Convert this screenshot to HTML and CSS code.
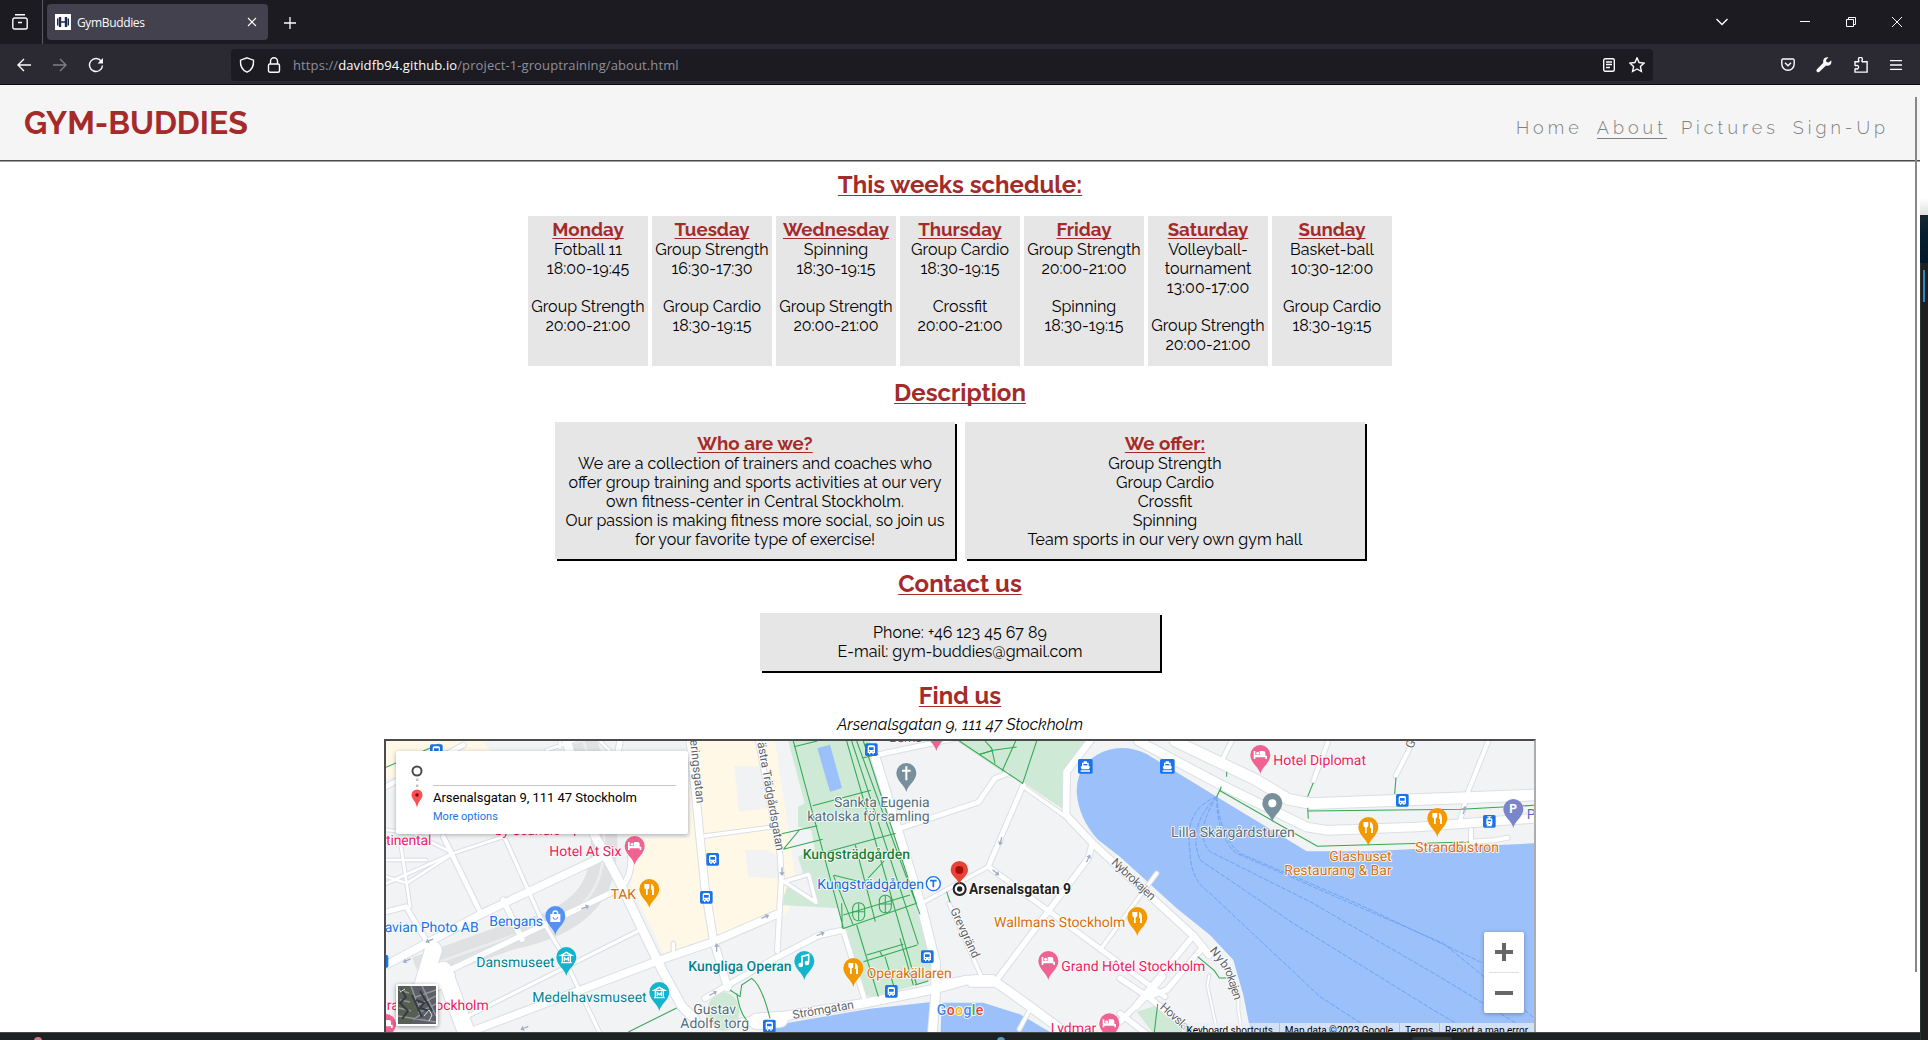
FILE: index.html
```html
<!DOCTYPE html>
<html lang="en">
<head>
<meta charset="utf-8">
<title>GymBuddies</title>
<link rel="stylesheet" href="styles.css">
</head>
<body>
<div class="window">
  <div class="tabbar">
    <svg class="ic view" viewBox="0 0 16 16"><path d="M3 .8h10M2.600 4h10.800a1.800 1.800 0 0 1 1.800 1.800v7.400a1.800 1.800 0 0 1-1.800 1.800H2.600a1.800 1.800 0 0 1-1.800-1.800V5.800A1.800 1.800 0 0 1 2.600 4zM6 8.500h4"/></svg>
    <div class="tab">
      <svg class="favicon" viewBox="0 0 16 16"><rect width="16" height="16" fill="#fff"/><path d="M5 3v10M11 3v10" stroke="#1b2c52" stroke-width="2.400"/><path d="M2.700 4.500v7M13.300 4.500v7" stroke="#1b2c52" stroke-width="1.400"/><path d="M6 8h4" stroke="#1b2c52" stroke-width="1.500"/></svg>
      <span class="tab-title">GymBuddies</span>
      <svg class="ic close" viewBox="0 0 10 10"><path d="M1 1l8 8M9 1L1 9"/></svg>
    </div>
    <svg class="ic plus" viewBox="0 0 12 12"><path d="M6 0v12M0 6h12"/></svg>
    <div class="controls">
      <svg class="ic chev" viewBox="0 0 12 8"><path d="M.5 1L6 6.500 11.500 1"/></svg>
      <svg class="ic min" viewBox="0 0 10 10"><path d="M0 4.500h10"/></svg>
      <svg class="ic max" viewBox="0 0 10 10"><path d="M.5 2.500h7v7h-7zM2.500 2.500v-2h7v7h-2"/></svg>
      <svg class="ic quit" viewBox="0 0 10 10"><path d="M0 0l10 10M10 0L0 10"/></svg>
    </div>
  </div>
  <div class="toolbar">
    <svg class="ic back" viewBox="0 0 14 14"><path d="M14 7H1M7 1L1 7l6 6"/></svg>
    <svg class="ic fwd" viewBox="0 0 14 14"><path d="M0 7h13M7 1l6 6-6 6"/></svg>
    <svg class="ic reload" viewBox="0 0 16 16"><path d="M13.500 4.500A6.500 6.500 0 1 0 14.500 8.500"/><path d="M15 1v5.500H9.500z" class="solid"/></svg>
    <div class="urlbar">
      <svg class="ic shield" viewBox="0 0 16 16"><path d="M8 .8l6.500 2.400c.4 5.300-1.500 9.800-6.500 12C3 13 1.100 8.500 1.500 3.200z"/></svg>
      <svg class="ic lock" viewBox="0 0 14 16"><rect x="1.500" y="7" width="11" height="8.200" rx="1.500"/><path d="M3.500 7V4.300a3.500 3.500 0 0 1 7 0V7"/></svg>
      <span class="url">https://<b>davidfb94.github.io</b>/project-1-grouptraining/about.html</span>
      <svg class="ic reader" viewBox="0 0 12 14"><rect x=".7" y=".7" width="10.600" height="12.600" rx="1.500"/><path d="M3 4h6M3 6.500h6M3 9.500h4"/></svg>
      <svg class="ic star" viewBox="0 0 16 16"><path d="M8 .9l2.100 4.600 5 .6-3.700 3.400 1 5L8 12l-4.400 2.500 1-5L.9 6.100l5-.6z"/></svg>
    </div>
    <svg class="ic pocket" viewBox="0 0 14 13"><path d="M2.200 1h9.600A1.300 1.300 0 0 1 13.200 2.300V6a6.200 6.200 0 0 1-12.400 0V2.300A1.300 1.300 0 0 1 2.200 1zM4 4.800l3 2.900 3-2.900"/></svg>
    <svg class="ic wrench" viewBox="0 0 16 16"><path class="solid" d="M15.200 3.500l-2.700 2-2-.4-.5-2 2.400-2.600C9.500-.4 6.300 2 7.300 5.700L1 12.200a1.600 1.600 0 0 0 2.500 2.500l6.500-6.200c3.500 1 6.300-1.500 5.200-5z"/></svg>
    <svg class="ic puzzle" viewBox="0 0 14 16"><path d="M1 4.800h3.500c1-.4-.2-1.300 0-2.500a1.900 1.900 0 0 1 3.800 0c.2 1.200-1 2.100 0 2.500h4.800v10.300H1V12c.3-1 1.200.2 2.300 0a1.900 1.900 0 0 0 0-3.600C2.200 8.200 1.300 9.300 1 8.400z"/></svg>
    <svg class="ic menu" viewBox="0 0 12 10"><path d="M0 .5h12M0 5h12M0 9.500h12"/></svg>
  </div>

  <div class="page">
    <header class="header">
      <div class="logo">GYM-BUDDIES</div>
      <nav class="nav"><a>Home</a><a class="active">About</a><a>Pictures</a><a>Sign-Up</a></nav>
    </header>
    <h2 class="t-schedule">This weeks schedule:</h2>
    <section class="schedule">
      <div class="day"><h3>Monday</h3><p>Fotball 11<br>18:00-19:45</p><p>Group Strength<br>20:00-21:00</p></div>
      <div class="day"><h3>Tuesday</h3><p>Group Strength<br>16:30-17:30</p><p>Group Cardio<br>18:30-19:15</p></div>
      <div class="day"><h3>Wednesday</h3><p>Spinning<br>18:30-19:15</p><p>Group Strength<br>20:00-21:00</p></div>
      <div class="day"><h3>Thursday</h3><p>Group Cardio<br>18:30-19:15</p><p>Crossfit<br>20:00-21:00</p></div>
      <div class="day"><h3>Friday</h3><p>Group Strength<br>20:00-21:00</p><p>Spinning<br>18:30-19:15</p></div>
      <div class="day"><h3>Saturday</h3><p>Volleyball-<br>tournament<br>13:00-17:00</p><p>Group Strength<br>20:00-21:00</p></div>
      <div class="day"><h3>Sunday</h3><p>Basket-ball<br>10:30-12:00</p><p>Group Cardio<br>18:30-19:15</p></div>
    </section>
    <h2 class="t-desc">Description</h2>
    <section class="about">
      <div class="card"><h3>Who are we?</h3><p>We are a collection of trainers and coaches who<br>offer group training and sports activities at our very<br>own fitness-center in Central Stockholm.<br>Our passion is making fitness more social, so join us<br>for your favorite type of exercise!</p></div>
      <div class="card"><h3>We offer:</h3><p>Group Strength<br>Group Cardio<br>Crossfit<br>Spinning<br>Team sports in our very own gym hall</p></div>
    </section>
    <h2 class="t-contact">Contact us</h2>
    <section class="about"><div class="card contact"><p>Phone: +46 123 45 67 89<br>E-mail: gym-buddies@gmail.com</p></div></section>
    <h2 class="t-find">Find us</h2>
    <address>Arsenalsgatan 9, 111 47 Stockholm</address>
    <div class="map">
      <svg class="canvas" viewBox="18 33 3444 873">
        <defs>
          <path id="pin" d="M0 57C-4 36-30 24-30 0a30 30 0 0 1 60 0C30 24 4 36 0 57z"/>
          <g id="bed" fill="#fff"><path d="M-20-12h5v14h30v-8a6 6 0 0 0-6-6H-2V0h-13v12h-5zM15 2h5v10h-5zM-16 2h32v5h-32z"/><circle cx="-8" cy="-5" r="4.500"/></g>
          <g id="fork" fill="#fff"><path d="M-15-15h15v10q0 6-5 6v17h-5V1q-5 0-5-6zM5-15q9 2 9 16v17H8V3H5z"/></g>
          <g id="museum" fill="none" stroke="#fff" stroke-width="4"><path d="M-16-8L0-17l16 9zM-12-7v20M12-7v20M-16 14h32M-6 10V-1l6 6 6-6v11"/></g>
          <g id="bus"><rect x="-19" y="-19" width="38" height="38" rx="5" fill="#1a73e8"/><path d="M-11 10V-8q0-5 5-5H6q5 0 5 5v18H7v4H3v-4h-6v4h-4v-4z" fill="#fff"/><path d="M-7-7H7v8H-7zM-7 5h3v2h-3zM4 5h3v2H4z" fill="#1a73e8"/></g>
          <g id="tram"><rect x="-19" y="-19" width="38" height="38" rx="5" fill="#1a73e8"/><path d="M-6-15H6v3H2v3h3q4 0 4 4V8q0 3-3 4l3 3H-9l3-3q-3-1-3-4v-13q0-4 4-4h3v-3h-4z" fill="#fff"/><path d="M-5-5H5v5H-5zM-2 5h4v3h-4z" fill="#1a73e8"/></g>
          <g id="ferry"><rect x="-22" y="-22" width="44" height="44" rx="5" fill="#1a73e8"/><path d="M-5-15H5v4h5v10l4 2-3 8h-22l-3-8 4-2v-10h5zM-14 12h28v4h-28z" fill="#fff"/><path d="M-6-7H6v4H-6z" fill="#1a73e8"/></g>
          <path id="arrow" d="M-13-2H2v-6L13 0 2 8V2h-15z" fill="#a5adc6"/>
          <g id="streets" fill="none" stroke-linejoin="round" stroke-linecap="round">
            <path class="w8" d="M20 300l80 10 120 60-140 90-62-20M80 460l-20-130M80 460l10 70M220 370L20 460M220 370l150-50M660 33l60 60M500 60l90-30M540 33v20M18 390l120 0"/>
            <path class="w14" d="M190 320l110 225M18 545l60-15 60 100M18 170L250 45"/>
            <path class="w10" d="M375 325l105 235 60 100 120 250M250 865l530-265"/>
            <path class="w16" d="M210 720l490-235M370 510l56 118M725 470q30-30 28-90"/>
            <path class="w22" d="M18 705l290-155 350-165"/>
            <path class="w60" d="M130 760l30-100M190 720l70 190M100 790l100-50"/>
            <path class="w26" d="M560 33l85 285 70 130 130 270 60 110 40 40"/>
            <path class="w16" d="M720 33l-10 60"/>
            <path class="w22" d="M270 906L840 690l160-55 190-82M931 33l44 440 26 160 42 140"/>
            <path class="w10" d="M880 640v30M975 318l210-28"/>
            <path class="w16" d="M975 805l95-55 115-65 130-68 72-16"/>
            <path class="w50" d="M1130 874l70-6"/>
            <g transform="translate(1080)">
              <path class="w14" d="M55 33l65 340 4 70-12 220M310 602l62 200"/>
              <path class="w10" d="M132 455l74-22 22 84z"/>
              <path class="w26" d="M0 880l380-62 200-40 100-28 80 2 50 34 150 110M402 70l145 470 40 160 0 90-10 120"/>
              <path class="w10" d="M600 755l110-15h50M690 765h90"/>
              <path class="w14" d="M410 75l260-55M480 295l235-78 50-72 35-14M850 165L745 410l340 250 190 140"/>
              <path class="w10" d="M745 410l-200 110M722 735l-95-215M850 170l130 92M1080 660l170-230M870 838l-32 60"/>
              <path class="w16" d="M770 750l150-200 125-165 12-45"/>
              <path class="w20" d="M1050 33l-70 92-2 130 80 85 300 275 50 60"/>
              <path class="w16" d="M1190 830l80-90M1140 850l90 70"/>
            </g>
            <g transform="translate(2220)">
              <path class="w16" d="M222 615L40 835l-40 40M250 650L140 780l-55 20M0 745l90 60 110 90"/>
              <path class="w6" d="M268 735l-6 30 30 141M355 790v50l10 66"/>
              <path class="w26" d="M55 33l245 130 260 128 60 10 270-10 352-26"/>
              <path class="w36" d="M165 33l240 115 100 60 70 13 667-26"/>
              <path class="w12" d="M335 33l-25 50M625 33l-45 120M880 33l-53 105M1105 33l-60 150-25 90M1053 300v35l70-4 40-8"/>
            </g>
          </g>
        </defs>
        <rect x="18" y="33" width="3444" height="873" fill="#f1f3f4"/>
        <g fill="#fff8e6">
          <path d="M18 33h290l30 35-80 20-240 60z"/>
          <path d="M735 33h450l70 470-50 60-355 107-95-200z"/>
        </g>
        <g fill="#f0f2f4"><path d="M1062 108l80 2 50 120-115 15zM1095 360l65 0 40 20v65l-95-5zM735 33h195v290H765z"/></g>
        <g fill="none" stroke="#e0e1e2"><path d="M610 33q90 260 50 400T390 620L110 720" stroke-width="80"/><path d="M610 33q90 260 50 400T390 620L110 720" stroke="#eceded" stroke-width="8"/></g>
        <g fill="#ceead6" transform="translate(1080)">
          <path d="M145 33h245l150 480 52 230-70 25-125 32-30-5-60-190-10-70-175-10 25-70 45-15-18-60 50-20-10-60-40-10v-60l20-10z"/>
          <path d="M650 33h390l-55 90-8 120-122-82-60-30z"/>
          <path d="M132 455l74-22 22 84z" fill="#f1f3f4"/>
          <ellipse cx="-50" cy="845" rx="48" ry="58"/>
          <path d="M1190 845l80-25 100 90h-130z"/>
        </g>
        <g fill="#9bc0fa">
          <path transform="translate(1080)" d="M232 55l38-11 36 130-36 11zM90 888l300-52 185-20-8 90H90zM605 818l125 0 110 35 90 53H602z"/>
          <path transform="translate(2220)" d="M80 72Q0 35-70 75q-60 35-60 110 5 80 65 145l65 50 170 155 100 80 70 75 30 105 22 111h852V340l-500 24H560L290 200z"/>
        </g>
        <g class="ferry-lines" transform="translate(2220)"><path d="M290 200q-100 40-80 160 0 90 60 130l330 310 170 110M290 200q-90 90-50 190l280 190 420 260 120 70M290 200q-70 110-20 165l300 150 380 220 280 170M290 200q0 120 60 170l320 140 300 130 280 230M290 200q10 120 70 170l350 150 380 180"/></g>
        <use href="#streets" class="casing"/>
        <use href="#streets" class="fill"/>
        <g class="paths">
          <path d="M18 112l160-70M1050 780l30 20 5-35 30-20q30 20 55 120M1070 790q10 60 30 80M745 906l145-72"/>
          <g transform="translate(1080)">
            <path d="M160 33l150 560M162 50l70-17M320 33l210 732M335 33l200 610M350 33l190 520M370 33l160 490M218 227l175-46M365 85l50-12M122 312l110-25M130 358l118-30M130 358l48-58M262 365l205-55M282 436l90 22 60-65M280 436l60 150M308 596l222-76M310 555l200-60M346 345l60 230M350 585l65 215M380 675l110-32M370 695l162-50M435 680l30 100M525 765l40-12M305 520l2 75M520 765l-40-140M420 665l8 15"/>
            <rect x="338" y="518" width="36" height="54" rx="17"/><rect x="418" y="496" width="36" height="52" rx="17"/><path d="M356 520v50M338 545h36M436 498v50M418 522h36"/>
            <path d="M658 33l190 127 42-127M720 73l40-12 70-10M735 33l20 22 10 45"/><path d="M787 122l40-89M760 61l-40 12M620 485l10 32"/>
          </g>
          <g transform="translate(2220)"><path d="M290 200l14-30-4 12 292 167 155-5 300-8M320 125v15M580 158l-17 42M563 233l2 33M563 243l460-5 219-12M828 142l-4 50M233 680l50 42 15 22h25M113 822l-10 84"/></g>
        </g>
        <g>
          <use href="#arrow" transform="translate(616 532) rotate(-22)"/><use href="#arrow" transform="translate(148 632) rotate(155)"/><use href="#arrow" transform="translate(80 692) rotate(155)"/><use href="#arrow" transform="translate(433 894) rotate(157)"/><use href="#arrow" transform="translate(1010 652) rotate(-90)"/><use href="#arrow" transform="translate(1156 560) rotate(-22)"/><use href="#arrow" transform="translate(1000 790) rotate(-28)"/><use href="#arrow" transform="translate(1206 425) rotate(90)"/><use href="#arrow" transform="translate(1322 612) rotate(-22)"/><use href="#arrow" transform="translate(1862 334) rotate(105)"/><use href="#arrow" transform="translate(1848 428) rotate(40)"/><use href="#arrow" transform="translate(2125 385) rotate(-65)"/><use href="#arrow" transform="translate(3253 240) rotate(-75)"/>
        </g>
        <g>
          <use href="#bus" x="169" y="62"/><use href="#bus" x="998" y="388"/><use href="#bus" x="979" y="502"/><use href="#bus" x="6" y="694"/><use href="#bus" x="1168" y="888"/><use href="#bus" x="1474" y="59"/><use href="#bus" x="1642" y="680"/><use href="#bus" x="1534" y="784"/><use href="#bus" x="3067" y="211"/><use href="#tram" x="3328" y="274"/><use href="#ferry" x="2116" y="109"/><use href="#ferry" x="2362" y="109"/>
        </g>
        <g class="pins">
          <g fill="#f06292"><use href="#pin" x="764" y="348"/><use href="#pin" x="18" y="882"/><use href="#pin" x="2005" y="693"/><use href="#pin" x="2188" y="880"/><use href="#pin" x="2641" y="75"/><use href="#pin" x="1669" y="6"/></g>
          <use href="#bed" x="764" y="348"/><use href="#bed" x="18" y="882"/><use href="#bed" x="2005" y="693"/><use href="#bed" x="2188" y="880"/><use href="#bed" x="2641" y="75"/>
          <g fill="#f29900"><use href="#pin" x="808" y="477"/><use href="#pin" x="1420" y="714"/><use href="#pin" x="2272" y="561"/><use href="#pin" x="2965" y="291"/><use href="#pin" x="3172" y="264"/></g>
          <use href="#fork" x="808" y="477"/><use href="#fork" x="1420" y="714"/><use href="#fork" x="2272" y="561"/><use href="#fork" x="2965" y="291"/><use href="#fork" x="3172" y="264"/>
          <g fill="#12b5cb"><use href="#pin" x="559" y="681"/><use href="#pin" x="838" y="786"/><use href="#pin" x="1273" y="693"/></g>
          <use href="#museum" x="559" y="684"/><use href="#museum" x="838" y="789"/>
          <path d="M1266 704v-25l20-5v22" fill="none" stroke="#fff" stroke-width="5"/><circle cx="1262" cy="705" r="7" fill="#fff"/><circle cx="1281" cy="699" r="7" fill="#fff"/>
          <use href="#pin" x="526" y="558" fill="#5491f5"/><path d="M511 552h30v24h-30z" fill="#fff"/><path d="M519 554v-4a7 7 0 0 1 14 0v4" fill="none" stroke="#fff" stroke-width="4"/><path d="M519 561a7 7 0 0 0 14 0" fill="none" stroke="#5491f5" stroke-width="3"/>
          <g fill="#78909c"><use href="#pin" x="1579" y="129"/><use href="#pin" x="2677" y="219"/></g>
          <path d="M1579 109v42M1566 122h26" stroke="#fff" stroke-width="6"/><circle cx="2677" cy="220" r="12" fill="#fff"/>
          <use href="#pin" x="3400" y="237" fill="#7986cb"/><text x="3388" y="250" class="parking">P</text>
        </g>
        <g class="labels">
          <g class="pink"><text x="18" y="346" textLength="136">tinental</text><text x="345" y="315" textLength="196">by Scandic</text><path d="M577 300h14l-7 20z" stroke="none"/><text x="508" y="377" textLength="216">Hotel At Six</text><text x="20" y="840">ra</text><text x="166" y="840" textLength="160">ockholm</text><text x="1527" y="37" textLength="100">Berns</text><text x="2044" y="723" textLength="432">Grand Hôtel Stockholm</text><text x="2012" y="910" textLength="137">Lydmar</text><text x="2680" y="105" textLength="278">Hotel Diplomat</text></g>
          <g class="orange"><text x="692" y="507" textLength="76">TAK</text><text x="1460" y="744" textLength="255">Operakällaren</text><text x="1842" y="591" textLength="394">Wallmans Stockholm</text><text x="2848" y="393" textLength="187">Glashuset</text><text x="2713" y="435" textLength="322">Restaurang &amp; Bar</text><text x="3106" y="366" textLength="251">Strandbistron</text></g>
          <g class="blue"><text x="14" y="606" textLength="282">avian Photo AB</text><text x="328" y="588" textLength="161">Bengans</text><text x="1312" y="477" textLength="320" class="metro">Kungsträdgården</text></g>
          <g class="teal"><text x="289" y="711" textLength="235">Dansmuseet</text><text x="457" y="816" textLength="343">Medelhavsmuseet</text><text x="925" y="723" textLength="310" class="med">Kungliga Operan</text></g>
          <g class="slate"><text x="940" y="852" textLength="128">Gustav</text><text x="901" y="894" textLength="206">Adolfs torg</text><text x="1362" y="231" textLength="287">Sankta Eugenia</text><text x="1282" y="273" textLength="367">katolska församling</text><text x="2373" y="320" textLength="371">Lilla Skärgårdsturen</text></g>
          <text x="1268" y="387" textLength="322" class="green med">Kungsträdgården</text>
          <text x="3440" y="266" class="purple">P</text>
          <g class="street">
            <text transform="translate(930 30) rotate(84)" textLength="192">eringsgatan</text>
            <text transform="translate(1132 38) rotate(80)" textLength="330">ästra Trädgårdsgatan</text>
            <text transform="translate(1240 867) rotate(-10)" textLength="186">Strömgatan</text>
            <text transform="translate(1710 540) rotate(65)" textLength="162">Grevgränd</text>
            <text transform="translate(2192 400) rotate(43)" textLength="166">Nybrokajen</text>
            <text transform="translate(2488 662) rotate(52)" textLength="70">Nyb</text>
            <text transform="translate(2532 715) rotate(72)" textLength="102">rokajen</text>
            <text transform="translate(2338 834) rotate(42)" textLength="120">Hovslag</text>
            <text transform="translate(3098 58) rotate(-68)">Gr</text>
          </g>
        </g>
        <circle cx="1660" cy="461" r="21" fill="#fff" stroke="#1a73e8" stroke-width="4"/><path d="M1650 452h20M1660 452v20" stroke="#1a73e8" stroke-width="5"/>
        <circle cx="1739" cy="477" r="18" fill="#fff" stroke="#222" stroke-width="6"/><circle cx="1739" cy="477" r="8" fill="#222"/>
        <path d="M1738 465c-3-20-26-26-26-46a26 26 0 0 1 52 0c0 20-23 26-26 46z" fill="#ea4335"/><circle cx="1738" cy="420" r="12" fill="#a50e0e"/>
        <text x="1767" y="492" textLength="306" class="dest">Arsenalsgatan 9</text>
        <text x="1670" y="856" class="google" textLength="140"><tspan fill="#4285f4">G</tspan><tspan fill="#ea4335">o</tspan><tspan fill="#fbbc04">o</tspan><tspan fill="#4285f4">g</tspan><tspan fill="#34a853">l</tspan><tspan fill="#ea4335">e</tspan></text>
      </svg>
      <div class="route">
        <svg class="route-ic" viewBox="0 0 12 43"><circle cx="6" cy="6" r="4.500" fill="none" stroke="#4a4a4a" stroke-width="2"/><path d="M5 13.500h2.500v2.500H5zM5 19.500h2.500v2.500H5z" fill="#c4c4c4"/><path d="M6 43C5 36 .5 34 .5 30a5.500 5.500 0 0 1 11 0C11.500 34 7 36 6 43z" fill="#fb4f54"/><circle cx="6" cy="30" r="1.800" fill="#7d1015"/></svg>
        <div class="route-text"><div class="from"></div><div class="to">Arsenalsgatan 9, 111 47 Stockholm</div><div class="more">More options</div></div>
      </div>
      <svg class="thumb" viewBox="0 0 38 38"><rect width="38" height="38" fill="#5c6066"/><path d="M0 0h14l8 28-10 10H0z" fill="#566050"/><path d="M13 0l10 28-8 6M0 30l38 6M15 12l23-8M18 20l20-10M20 27l18-9M24 0l14 30M1 4l10 3M2 14l10 2M1 22l12 3" stroke="#9692a0" stroke-width="1.500" fill="none"/><path d="M3 3l5 8-6 6 8 8-6 8M14 9l10 22M22 5l12 20M18 14l8 3-4 5 9 3" stroke="#363b3f" stroke-width="2" fill="none"/><path d="M26 30l5-6 3 5-3 6M2 6l5-3" stroke="#dde" fill="none"/></svg>
      <div class="zoom"><span class="zin"></span><i></i><span class="zout"></span></div>
      <div class="legal"><span>Keyboard shortcuts</span><span>Map data ©2023 Google</span><span>Terms</span><span>Report a map error</span></div>
    </div>
    <div class="scrollbar"></div>
  </div>
  <div class="taskbar"><i class="t1"></i><i class="t2"></i><i class="t3"></i></div>
</div>
<aside class="edge"><div class="edge-top"></div><div class="edge-photo"></div><div class="edge-panel"><i></i></div></aside>
</body>
</html>
```
FILE: styles.css
```css
* { box-sizing: border-box; }
body { margin: 0; width: 1928px; height: 1040px; overflow: hidden; display: flex; font-family: "Raleway", "Lato", sans-serif; font-size: 16px; line-height: 19px; color: #000; background: #fff; }
h2, h3, p { margin: 0; }
.window { width: 1920px; height: 1040px; display: flex; flex-direction: column; }
.ic { fill: none; stroke: #fbfbfe; stroke-width: 1.4; flex: none; }
.ic .solid { fill: #fbfbfe; stroke: none; }

/* browser chrome */
.tabbar { height: 44px; background: #1c1b22; display: flex; align-items: center; padding-left: 12px; flex: none; }
.view { width: 16px; height: 16px; }
.tab { position: relative; width: 221px; height: 36px; margin-left: 19px; background: #42414d; border-radius: 4px; display: flex; align-items: center; padding: 0 11px 0 8px; }
.tab::before { content: ""; position: absolute; left: -5px; top: -4px; width: 1px; height: 44px; background: #5b5b66; }
.favicon { width: 16px; height: 16px; }
.tab-title { margin-left: 6px; flex: 1; color: #fbfbfe; font: 12px "Open Sans", sans-serif; letter-spacing: -.35px; }
.close { width: 10px; height: 10px; stroke-width: 1.1; }
.plus { width: 12px; height: 12px; margin: 2px 0 0 16px; stroke-width: 1.3; }
.controls { margin-left: auto; display: flex; align-items: center; padding-right: 18px; }
.chev { width: 12px; height: 8px; margin-right: 72px; }
.min, .max, .quit { width: 10px; height: 10px; stroke-width: 1; overflow: visible; }
.min, .max { margin-right: 36px; }
.toolbar { height: 41px; background: #2b2a33; border-bottom: 1px solid #0c0c0d; display: flex; align-items: center; padding: 1px 18px 0 17px; flex: none; }
.back, .fwd { width: 14px; height: 14px; }
.fwd { margin-left: 22px; opacity: .4; }
.reload { width: 16px; height: 16px; margin-left: 21px; }
.urlbar { width: 1422px; height: 32px; margin-left: 127px; background: #1c1b22; border-radius: 4px; display: flex; align-items: center; padding: 0 8px; }
.shield { width: 16px; height: 16px; }
.lock { width: 14px; height: 16px; margin-left: 12px; }
.url { flex: 1; margin: 1px 0 0 12px; font: 13px "Open Sans", sans-serif; color: #8f8f9a; letter-spacing: .11px; }
.url b { font-weight: 400; color: #fbfbfe; }
.reader { width: 12px; height: 14px; }
.star { width: 16px; height: 16px; margin-left: 14px; }
.pocket { width: 14px; height: 13px; margin-left: 128px; }
.wrench { width: 16px; height: 16px; margin-left: 21px; }
.puzzle { width: 14px; height: 16px; margin-left: 22px; }
.menu { width: 12px; height: 10px; margin-left: 22px; }

/* site */
.page { position: relative; height: 947px; overflow: hidden; flex: none; display: flex; flex-direction: column; align-items: center; }
.header { width: 100%; height: 77px; flex: none; background: #f5f5f5; border-bottom: 1px solid #a0a0a0; box-shadow: inset 0 -1px 0 #4a4a4a; display: flex; justify-content: space-between; padding: 0 31px 0 24px; color: #a52a2a; }
.logo { font-size: 32px; font-weight: 700; line-height: 38px; padding-top: 19px; }
.nav { display: flex; gap: 14px; padding-top: 31px; font-size: 18px; line-height: 24px; letter-spacing: 4px; color: #808080; font-weight: 300; }
.nav a { height: 23px; }
.nav .active { border-bottom: 1px solid #808080; }
h2 { color: #a52a2a; font-size: 24px; line-height: 28px; text-decoration: underline; text-decoration-thickness: 1px; text-underline-offset: 2px; text-decoration-skip-ink: none; flex: none; }
h3 { color: #a52a2a; font-size: 18.720px; line-height: 22px; text-decoration: underline; text-decoration-thickness: 1px; text-underline-offset: 2px; text-decoration-skip-ink: none; }
.t-schedule { margin: 9px 0 17px; }
.schedule { display: flex; gap: 4px; flex: none; font-variant-numeric: oldstyle-nums; }
.day { width: 120px; height: 150px; background: #e6e6e6; padding-top: 2px; text-align: center; white-space: nowrap; }
.day p + p { margin-top: 19px; }
.t-desc { margin: 13px 0 15px; }
.about { display: flex; gap: 10px; flex: none; }
.card { width: 400px; height: 137px; background: #e6e6e6; box-shadow: 2px 2px 0 #000; padding-top: 10px; text-align: center; white-space: nowrap; }
.t-contact { margin: 11px 0 15px; }
.contact { height: 58px; font-variant-numeric: oldstyle-nums; }
.t-find { margin: 11px 0 5px; }
address { flex: none; height: 24px; font-variant-numeric: oldstyle-nums; }
.scrollbar { position: absolute; right: 3px; top: 12px; width: 2px; height: 875px; background: #858788; }

/* map */
.map { position: relative; width: 1152px; height: 600px; flex: none; border: 2px solid; border-color: #4c4a4c #adadad #adadad #4c4a4c; font-family: Roboto, sans-serif; }
.canvas { display: block; width: 1148px; height: 291px; }
.w6 { stroke-width: calc(6px + var(--edge)); } .w8 { stroke-width: calc(8px + var(--edge)); } .w10 { stroke-width: calc(10px + var(--edge)); }
.w12 { stroke-width: calc(12px + var(--edge)); } .w14 { stroke-width: calc(14px + var(--edge)); } .w16 { stroke-width: calc(16px + var(--edge)); }
.w20 { stroke-width: calc(20px + var(--edge)); } .w22 { stroke-width: calc(22px + var(--edge)); } .w26 { stroke-width: calc(26px + var(--edge)); }
.w36 { stroke-width: calc(32px + var(--edge)); } .w50 { stroke-width: calc(46px + var(--edge)); } .w60 { stroke-width: calc(50px + var(--edge)); }
.casing { --edge: 6px; stroke: #dadfe6; }
.fill { --edge: 0px; stroke: #fff; }
.ferry-lines { fill: none; stroke: #6ea3f5; stroke-width: 3; stroke-dasharray: 14 5; }
.paths { fill: none; stroke: #34a853; stroke-width: 3.200; }
.labels { font-size: 42px; stroke: #fff; stroke-width: 5px; stroke-linejoin: round; text-rendering: geometricPrecision; }
.labels text, .dest, .google { paint-order: stroke; }
.pink { fill: #e91e63; } .orange { fill: #d56e0c; } .blue { fill: #1a73e8; } .teal { fill: #00838f; } .slate { fill: #546e7a; } .green { fill: #188038; } .purple { fill: #5c6bc0; }
.metro { fill: #1967d2; }
.med { font-weight: 500; }
.street { font-size: 36px; fill: #5f6368; }
.parking { font-size: 36px; font-weight: 700; fill: #fff; }
.dest { font-size: 42px; font-weight: 700; fill: #222; stroke: #fff; stroke-width: 6px; }
.google { font: 500 42px Roboto, sans-serif; stroke: #fff; stroke-width: 5px; }
.route { position: absolute; left: 10px; top: 10px; width: 292px; height: 83px; background: #fff; border-radius: 2px; box-shadow: 0 1px 4px rgba(0,0,0,.3); display: flex; padding: 14px 12px 0 15px; }
.route-ic { width: 12px; height: 43px; flex: none; }
.route-text { flex: 1; margin-left: 10px; }
.from { height: 21px; border-bottom: 1px solid #c6c6c6; }
.to { margin-top: 2px; font-size: 13px; line-height: 20px; letter-spacing: -.02px; }
.more { font-size: 11px; line-height: 17px; color: #1a73e8; letter-spacing: 0; }
.thumb { position: absolute; left: 10px; top: 243px; width: 42px; height: 42px; border: 2px solid #fff; border-radius: 2px; box-shadow: 0 1px 4px rgba(0,0,0,.4); }
.zoom { position: absolute; left: 1098px; top: 191px; width: 40px; height: 81px; background: #fff; border-radius: 2px; box-shadow: 0 1px 4px rgba(0,0,0,.3); display: flex; flex-direction: column; align-items: center; padding-top: 11px; }
.zoom i { width: 30px; height: 1px; background: #e0e0e0; margin: 11px 0 18px; }
.zin { width: 18px; height: 18px; background: linear-gradient(#666, #666) center / 18px 4px no-repeat, linear-gradient(#666, #666) center / 4px 18px no-repeat; }
.zout { width: 18px; height: 4px; background: #666; }
.legal { position: absolute; right: 0; top: 282px; display: flex; height: 14px; font-size: 10px; line-height: 16px; letter-spacing: -.03px; background: rgba(235,240,245,.7); }
.legal span { padding: 0 6px 0 5px; border-left: 1px solid #9bc0fa; white-space: nowrap; }
.legal span:first-child { border: 0; }

/* surrounding desktop */
.taskbar { position: relative; height: 8px; background: #1b2221; border-top: 1px solid #48484a; }
.taskbar i { position: absolute; top: 4px; height: 4px; }
.t1 { left: 34px; width: 8px; background: #d97386; border-radius: 4px 4px 0 0; }
.t2 { left: 997px; width: 8px; background: #4a9cc0; border-radius: 4px 4px 0 0; }
.t3 { left: 1412px; width: 40px; background: #2d3434; border-radius: 3px 3px 0 0; }
.edge { width: 8px; height: 1040px; display: flex; flex-direction: column; background: #1f1f1f; }
.edge-top { height: 215px; background: linear-gradient(#fff 198px, #e0e0e0); }
.edge-photo { height: 48px; background: linear-gradient(#142833, #071d31 40%, #03182a); border-radius: 6px 0 0 0; }
.edge-panel { flex: 1; border-left: 1px solid #283635; padding: 7px 0 0 2px; }
.edge-panel i { display: block; width: 2px; height: 32px; background: #3089bd; }
```
